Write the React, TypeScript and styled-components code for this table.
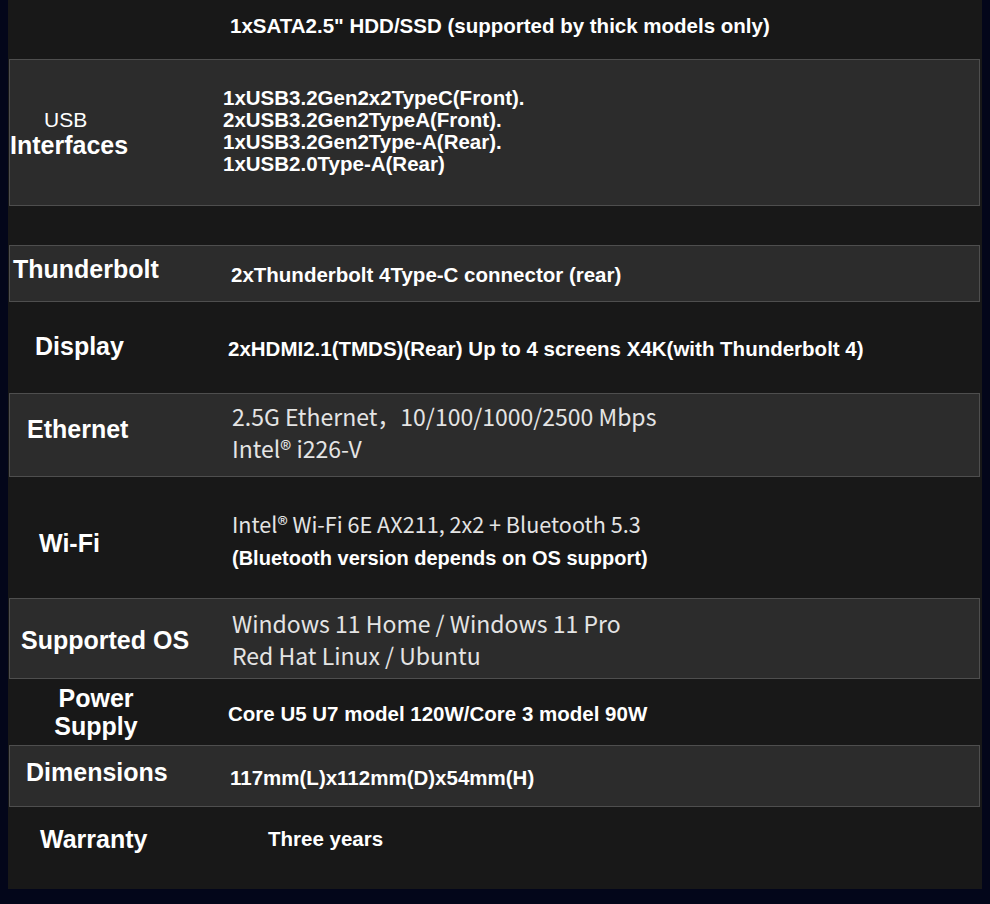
import React from 'react'
import styled, { createGlobalStyle } from 'styled-components'

const GlobalStyle = createGlobalStyle`
body {
  margin: 0;
  background: #03061a;
  font-family: "Liberation Sans", Arial, sans-serif;
}
`

const Page = styled.div`
width: 990px;
height: 904px;
background: #03061a;
`

const Panel = styled.section`
margin-left: 8px;
width: 974px;
background: #181818;
display: flex;
flex-direction: column;
`

const Row = styled.div<{ $h: number; $boxed?: boolean; $lift?: number }>`
display: grid;
grid-template-columns: ${p => (p.$boxed ? 208 : 210)}px 1fr;
align-items: center;
box-sizing: border-box;
height: ${p => p.$h}px;
padding-bottom: ${p => p.$lift ?? 0}px;
margin: ${p => (p.$boxed ? '0 2px 0 1px' : '0')};
background: ${p => (p.$boxed ? '#2c2c2c' : 'transparent')};
border: ${p => (p.$boxed ? '1px solid #4e4e4e' : 'none')};
`

const Label = styled.div<{ $pad: number; $padRight?: number; $center?: boolean; $dy?: number }>`
padding-left: ${p => p.$pad}px;
padding-right: ${p => p.$padRight ?? 0}px;
text-align: ${p => (p.$center ? 'center' : 'left')};
color: #fff;
font-weight: bold;
font-size: 25px;
line-height: 28px;
white-space: nowrap;
transform: translateY(${p => p.$dy ?? 0}px);
`

const SmallLabel = styled.span`
display: block;
font-weight: normal;
font-size: 21px;
line-height: 22px;
padding-left: 34px;
`

const Value = styled.div<{ $pad: number; $dy?: number }>`
padding-left: ${p => p.$pad}px;
transform: translateY(${p => p.$dy ?? 0}px);
`

const BoldLine = styled.div<{ $lh?: number }>`
color: #fff;
font-weight: bold;
font-size: 20.5px;
line-height: ${p => p.$lh ?? 24}px;
white-space: nowrap;
`

const LightLine = styled.div<{ $size?: number }>`
color: #e4e4e4;
font-family: "Noto Sans CJK SC", "Noto Sans", sans-serif;
font-size: ${p => p.$size ?? 23}px;
line-height: 32px;
white-space: nowrap;
`

const NoteLine = styled(BoldLine)`
font-size: 20px;
line-height: 30px;
margin-top: 3px;
`

const Gap = styled.div<{ $h: number }>`
height: ${p => p.$h}px;
`

export default function App() {
  return (
    <Page>
      <GlobalStyle />
      <Panel>
        <Row $h={59} $lift={8}>
          <span />
          <Value $pad={12}>
            <BoldLine>1xSATA2.5" HDD/SSD (supported by thick models only)</BoldLine>
          </Value>
        </Row>

        <Row $boxed $h={147}>
          <Label $pad={0} $dy={1}>
            <SmallLabel>USB</SmallLabel>
            Interfaces
          </Label>
          <Value $pad={5} $dy={-2}>
            <BoldLine $lh={22}>1xUSB3.2Gen2x2TypeC(Front).</BoldLine>
            <BoldLine $lh={22}>2xUSB3.2Gen2TypeA(Front).</BoldLine>
            <BoldLine $lh={22}>1xUSB3.2Gen2Type-A(Rear).</BoldLine>
            <BoldLine $lh={22}>1xUSB2.0Type-A(Rear)</BoldLine>
          </Value>
        </Row>

        <Gap $h={39} />

        <Row $boxed $h={57}>
          <Label $pad={3} $dy={-5}>Thunderbolt</Label>
          <Value $pad={13} $dy={1}>
            <BoldLine>2xThunderbolt 4Type-C connector (rear)</BoldLine>
          </Value>
        </Row>

        <Row $h={91}>
          <Label $pad={27} $dy={-2}>Display</Label>
          <Value $pad={10} $dy={1}>
            <BoldLine>2xHDMI2.1(TMDS)(Rear) Up to 4 screens X4K(with Thunderbolt 4)</BoldLine>
          </Value>
        </Row>

        <Row $boxed $h={84}>
          <Label $pad={17} $dy={-6}>Ethernet</Label>
          <Value $pad={14} $dy={-3}>
            <LightLine>2.5G Ethernet，10/100/1000/2500 Mbps</LightLine>
            <LightLine>Intel® i226-V</LightLine>
          </Value>
        </Row>

        <Row $h={121}>
          <Label $pad={31} $dy={5}>Wi-Fi</Label>
          <Value $pad={14} $dy={3}>
            <LightLine $size={21.6}>Intel® Wi-Fi 6E AX211, 2x2 + Bluetooth 5.3</LightLine>
            <NoteLine>(Bluetooth version depends on OS support)</NoteLine>
          </Value>
        </Row>

        <Row $boxed $h={81}>
          <Label $pad={11} $dy={1}>Supported OS</Label>
          <Value $pad={14}>
            <LightLine>Windows 11 Home / Windows 11 Pro</LightLine>
            <LightLine>Red Hat Linux / Ubuntu</LightLine>
          </Value>
        </Row>

        <Row $h={66}>
          <Label $pad={0} $padRight={34} $center>
            Power
            <br />
            Supply
          </Label>
          <Value $pad={10} $dy={2}>
            <BoldLine>Core U5 U7 model 120W/Core 3 model 90W</BoldLine>
          </Value>
        </Row>

        <Row $boxed $h={62}>
          <Label $pad={16} $dy={-4}>Dimensions</Label>
          <Value $pad={12} $dy={2}>
            <BoldLine>117mm(L)x112mm(D)x54mm(H)</BoldLine>
          </Value>
        </Row>

        <Row $h={82} $lift={18}>
          <Label $pad={32}>Warranty</Label>
          <Value $pad={50}>
            <BoldLine>Three years</BoldLine>
          </Value>
        </Row>
      </Panel>
    </Page>
  )
}
